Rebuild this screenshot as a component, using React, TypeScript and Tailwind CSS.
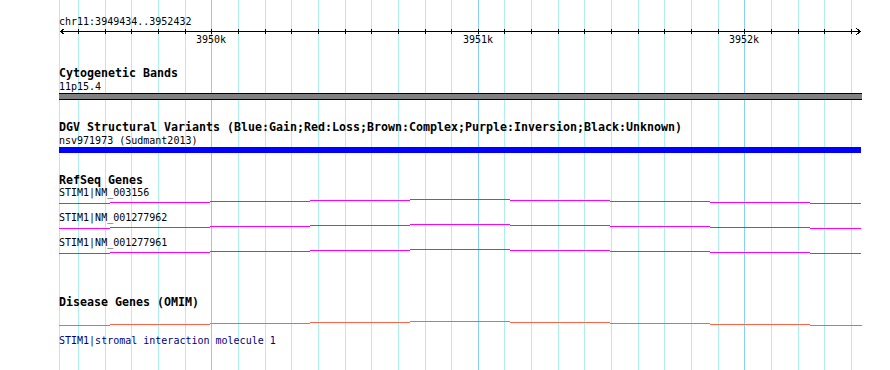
import React from 'react';

// x position (page px) of a base pair coordinate on the ruler
const bpToX = (bp: number) => Math.round(211.3 + (bp - 3950000) * 0.2665);

const ticks: { x: number; major: boolean; label?: string }[] = [];
for (let bp = 3949500; bp <= 3952400; bp += 100) {
    const major = bp % 1000 === 0;
    ticks.push({ x: bpToX(bp), major, label: major ? `${bp / 1000}k` : undefined });
}

// intron "hat" line drawn in 100px steps, peak in the middle
const hatSteps: [number, number, number][] = [
    [59, 110, 4], [110, 210, 3], [210, 310, 2], [310, 410, 1], [410, 510, 0],
    [510, 610, 1], [610, 710, 2], [710, 810, 3], [810, 861, 4],
];

const HatLine: React.FC<{ color: string; top: number; height: number; end?: number }> = ({ color, top, height, end = 861 }) => (
    <svg width={890} height={height} className="block" shapeRendering="crispEdges">
        {hatSteps.map(([a, b, dy], i) => (
            <rect key={i} x={a} y={top + dy} width={(i === hatSteps.length - 1 ? end : b) - a} height={1} fill={color} />
        ))}
    </svg>
);

const Heading: React.FC<{ children: React.ReactNode; className?: string }> = ({ children, className = '' }) => (
    <div className={`pl-[59px] text-[11.63px] font-bold leading-[13px] h-[13px] whitespace-nowrap text-black ${className}`}>{children}</div>
);

const Label: React.FC<{ children: React.ReactNode; className?: string }> = ({ children, className = '' }) => (
    <div className={`pl-[59px] text-[10px] leading-[13px] h-[13px] whitespace-nowrap ${className}`}>{children}</div>
);

const transcripts = ['STIM1|NM_003156', 'STIM1|NM_001277962', 'STIM1|NM_001277961'];

const App: React.FC = () => {
    return (
        <div className="relative w-[890px] h-[370px] overflow-hidden bg-white font-['DejaVu_Sans_Mono',monospace] text-black">
            {/* grid lines behind the tracks */}
            <svg width={890} height={370} className="absolute inset-0" shapeRendering="crispEdges">
                <rect x={59} y={0} width={1} height={370} fill="#afeeee" />
                {ticks.map((t) => (
                    <rect key={t.x} x={t.x} y={0} width={1} height={370} fill={t.major ? '#87cefa' : '#afeeee'} />
                ))}
            </svg>

            <div className="relative flex flex-col pt-[15px]">
                {/* ruler */}
                <Label>chr11:3949434..3952432</Label>
                <svg width={890} height={39} className="block" shapeRendering="crispEdges">
                    <rect x={60} y={3} width={801} height={1} fill="#000" />
                    <path d="M64.5 0.5 L60.5 3.5 L64.5 6.5" fill="none" stroke="#000" strokeWidth={1} />
                    <path d="M856.5 0.5 L860.5 3.5 L856.5 6.5" fill="none" stroke="#000" strokeWidth={1} />
                    {ticks.map((t) => (
                        <rect key={t.x} x={t.x} y={1} width={1} height={5} fill="#000" />
                    ))}
                    {ticks.filter((t) => t.label).map((t) => (
                        <text key={t.x} x={t.x} y={15.3} textAnchor="middle" fontSize={10} fontFamily="DejaVu Sans Mono, monospace" fill="#000">
                            {t.label}
                        </text>
                    ))}
                </svg>

                {/* cytogenetic bands */}
                <Heading>Cytogenetic Bands</Heading>
                <Label>11p15.4</Label>
                <div className="ml-[59px] w-[803px] h-[7px] bg-[#808080] border-y border-black" />

                {/* DGV */}
                <Heading className="mt-[21px]">DGV Structural Variants (Blue:Gain;Red:Loss;Brown:Complex;Purple:Inversion;Black:Unknown)</Heading>
                <Label>nsv971973 (Sudmant2013)</Label>
                <div className="ml-[59px] w-[802px] h-[6px] bg-[#0000ff]" />

                {/* RefSeq */}
                <div className="mt-[21px] pl-[59px] text-[11.63px] font-bold leading-[12px] h-[12px] whitespace-nowrap">RefSeq Genes</div>
                {transcripts.map((name) => (
                    <div key={name} className="flex flex-col">
                        <Label>{name}</Label>
                        <HatLine color="#ff00ff" top={0} height={12} />
                    </div>
                ))}

                {/* OMIM */}
                <Heading className="mt-[35px]">Disease Genes (OMIM)</Heading>
                <HatLine color="#ff6347" top={12} height={25} end={862} />
                <Label className="text-[#000080]">STIM1|stromal interaction molecule 1</Label>
            </div>
        </div>
    );
};

export default App;
